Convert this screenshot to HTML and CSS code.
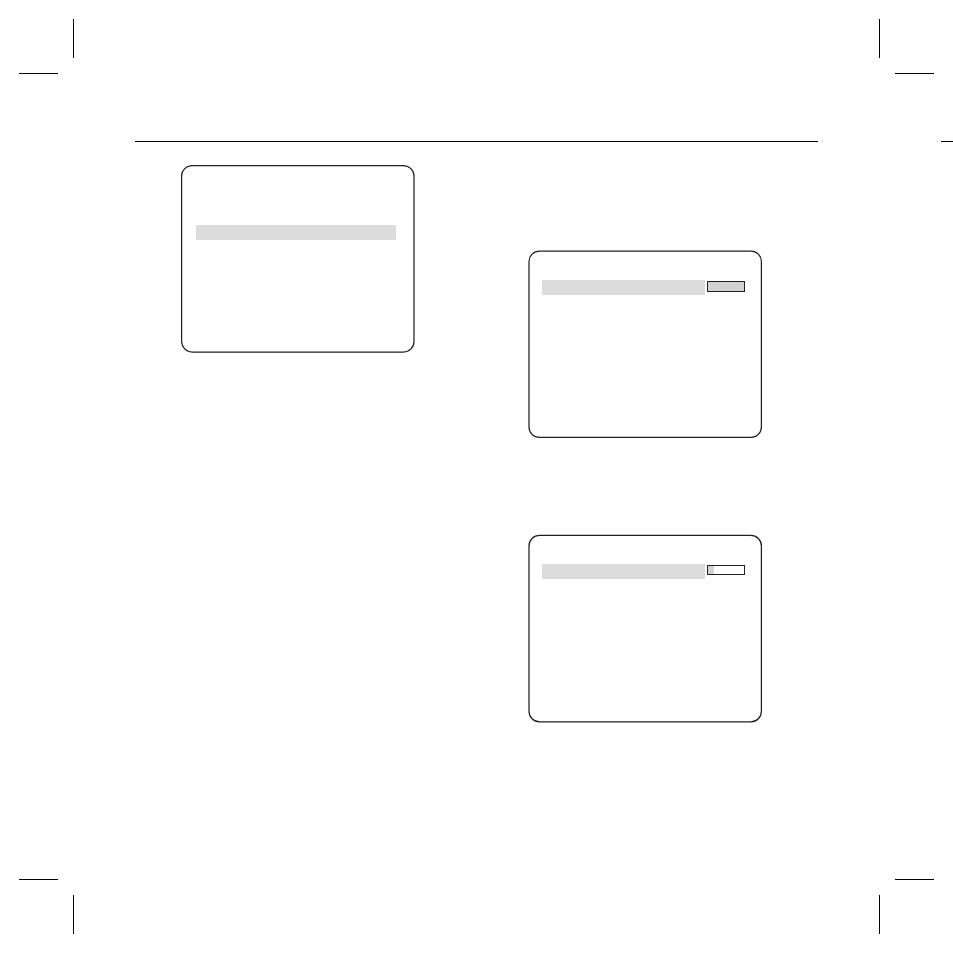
FILE: index.html
```html
<!DOCTYPE html>
<html lang="en">
<head>
<meta charset="utf-8">
<meta name="viewport" content="width=device-width, initial-scale=1">
<title>Menu screens</title>
<link rel="stylesheet" href="styles.css">
</head>
<body>
<div class="page">
  <div class="marks">
    <svg class="mark" viewBox="0 0 55 55" aria-hidden="true"><path d="M54 0h1v39h-1zM0 54h39v1H0z"/></svg>
    <svg class="mark" viewBox="0 0 55 55" aria-hidden="true"><path d="M0 0h1v39H0zM16 54h39v1H16z"/></svg>
  </div>
  <div class="rules">
    <hr class="rule">
    <hr class="rule rule-next">
  </div>
  <main class="columns">
    <section class="column">
      <div class="screen screen-main">
        <svg class="frame" viewBox="0 0 235 189" aria-hidden="true"><rect x="0.6" y="0.6" width="232.4" height="186.4" rx="10.5"/></svg>
        <div class="bar"></div>
      </div>
    </section>
    <section class="column column-right">
      <div class="screen">
        <svg class="frame" viewBox="0 0 235 189" aria-hidden="true"><rect x="1" y="1" width="232.4" height="186.4" rx="10.5"/></svg>
        <div class="row">
          <div class="bar"></div>
          <div class="gauge gauge-full"><div class="level"></div></div>
        </div>
      </div>
      <div class="screen">
        <svg class="frame" viewBox="0 0 235 189" aria-hidden="true"><rect x="1" y="1.4" width="232.4" height="186.4" rx="10.5"/></svg>
        <div class="row">
          <div class="bar"></div>
          <div class="gauge gauge-low"><div class="level"></div></div>
        </div>
      </div>
    </section>
  </main>
  <div class="marks marks-bottom">
    <svg class="mark" viewBox="0 0 55 55" aria-hidden="true"><path d="M0 0h39v1H0zM54 16h1v39h-1z"/></svg>
    <svg class="mark" viewBox="0 0 55 55" aria-hidden="true"><path d="M16 0h39v1H16zM0 16h1v39H0z"/></svg>
  </div>
</div>
</body>
</html>
```
FILE: styles.css
```css
* {
  box-sizing: border-box;
}

body {
  margin: 0;
  background: #fff;
  color: #231f20;
  font-family: "Liberation Sans", sans-serif;
}

.page {
  display: flex;
  flex-direction: column;
  min-height: 100vh;
  padding: 19px 0;
}

.marks {
  display: flex;
  justify-content: space-between;
  padding: 0 19px;
}

.marks-bottom {
  margin-top: auto;
}

.mark {
  display: block;
  width: 55px;
  height: 55px;
  fill: #000;
  shape-rendering: crispEdges;
}

.rules {
  display: flex;
  gap: 123px;
  margin-top: 67px;
  padding-left: 135px;
}

.rule {
  flex: 1;
  height: 1px;
  margin: 0;
  border: 0;
  background: #000;
}

.rule-next {
  flex: 0 0 12px;
}

.columns {
  display: grid;
  grid-template-columns: 347px 1fr;
  padding: 23px 135px 0 181px;
}

.column {
  display: flex;
  flex-direction: column;
  align-items: flex-start;
  gap: 95px;
}

.column-right {
  padding-top: 85px;
}

.screen {
  position: relative;
  width: 235px;
  height: 189px;
  padding: 30px 18px 0 14px;
}

.screen-main {
  padding: 60px 20px 0 15px;
}

.frame {
  position: absolute;
  inset: 0;
  width: 100%;
  height: 100%;
  fill: none;
  stroke: #231f20;
  stroke-width: 1.25;
}

.bar {
  flex: 1;
  height: 15px;
  background: #dcdcdc;
}

.row {
  display: flex;
  align-items: flex-start;
  gap: 2px;
}

.gauge {
  width: 38px;
  height: 11px;
  margin-top: 1px;
  border: 1px solid #231f20;
}

.gauge-low {
  height: 10px;
}

.level {
  height: 100%;
  background: #d1d3d2;
}

.gauge-low .level {
  width: 6px;
}
```
